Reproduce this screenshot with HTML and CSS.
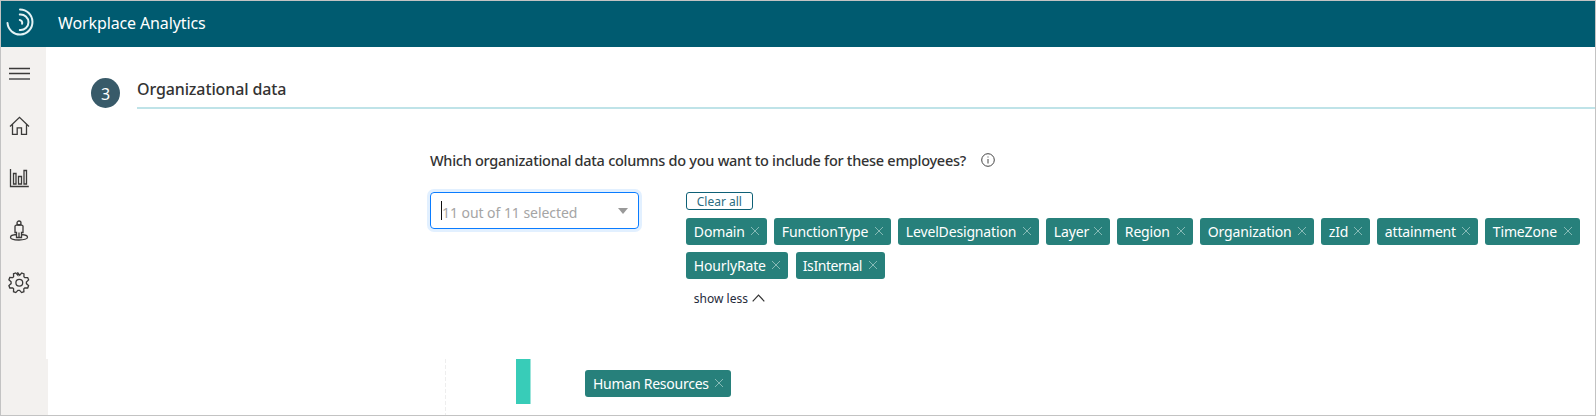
FILE: index.html
```html
<!DOCTYPE html>
<html lang="en">
<head>
<meta charset="utf-8">
<title>Workplace Analytics</title>
<link rel="stylesheet" href="styles.css">
</head>
<body>
<svg class="defs" width="0" height="0"><symbol id="x" viewBox="0 0 10 10"><path d="M1 1l8 8M9 1l-8 8"/></symbol></svg>
<div class="app">
<header class="header">
<svg class="logo" viewBox="0 0 30 30" fill="none"><path d="M15 2.500a12.500 12.500 0 1 1-12.500 13.500"/><path d="M14.800 7.500a7.800 7.800 0 1 1 0 15.500"/><path d="M14.800 13a3 3 0 0 1 2.300 3.800"/></svg>
<span class="product">Workplace Analytics</span>
</header>
<div class="body">
<nav class="sidebar">
<svg class="icon" viewBox="0 0 22 22"><path d="M1 6.500h21M1 11.500h21"/><path class="soft" d="M1 17h21"/></svg>
<svg class="icon" viewBox="0 0 22 22"><path d="M2 11.500L11.500 2.300l9.500 9.200M4.500 9.300v10h4.700v-6.500h4.300v6.500h5v-10"/></svg>
<svg class="icon" viewBox="0 0 22 22"><path d="M2.500 2v17.500h18.300M5.500 6.500h2.500v10.500h-2.500zM10.500 9.500h3v7.500h-3zM16 3.500h2.500v13.500H16z"/></svg>
<svg class="icon" viewBox="0 0 22 22"><circle cx="11" cy="3" r="2"/><path d="M8.500 5h5l1.500 1v6.500h-1.500v5h-5v-5H7V6zM11 12.500v5M8.500 14.500c-3.500.3-6 1.300-6 2.700 0 1.700 3.800 2.800 8.500 2.800s8.500-1.100 8.500-2.800c0-1.400-2.500-2.400-6-2.700"/></svg>
<svg class="icon" viewBox="0 0 22 22"><path d="M9.900 1l1.800 2.200L13.700 1l2.300.9-.1 2.900.9.9 2.900-.1.900 2.300-2.200 2.100v1.600l2.200 2-.9 2.400-2.900-.1-1 .9.100 2.900-2.300.9-2-2.200h-1.700l-2.100 2.200-2.300-.9.100-2.900-.9-.9-2.900.1-.9-2.400 2.200-2V9.900L.9 7.800l.9-2.300 2.900.1.900-.9-.1-2.900 2.300-.9 2 2.200z"/><circle cx="11.300" cy="10.800" r="3.400"/></svg>
</nav>
<main class="main">
<section class="step"><span class="number">3</span><h1 class="title">Organizational data</h1></section>
<section class="columns">
<div class="question"><span class="q">Which organizational data columns do you want to include for these employees?</span><svg class="info" viewBox="0 0 14 14"><circle cx="7" cy="7" r="6.300"/><path d="M7 6v4.500M7 3.500v1"/></svg></div>
<div class="picker">
<div class="select"><i class="caret"></i><span class="placeholder">11 out of 11 selected</span><i class="arrow"></i></div>
<div class="selection">
<button class="clear">Clear all</button>
<div class="tags">
<span class="tag domain">Domain<svg><use href="#x"/></svg></span>
<span class="tag function">FunctionType<svg><use href="#x"/></svg></span>
<span class="tag level">LevelDesignation<svg><use href="#x"/></svg></span>
<span class="tag layer">Layer<svg><use href="#x"/></svg></span>
<span class="tag region">Region<svg><use href="#x"/></svg></span>
<span class="tag organization">Organization<svg><use href="#x"/></svg></span>
<span class="tag zid">zId<svg><use href="#x"/></svg></span>
<span class="tag attainment">attainment<svg><use href="#x"/></svg></span>
<span class="tag timezone">TimeZone<svg><use href="#x"/></svg></span>
<span class="tag hourly">HourlyRate<svg><use href="#x"/></svg></span>
<span class="tag internal">IsInternal<svg><use href="#x"/></svg></span>
</div>
<div class="less"><span>show less</span><svg viewBox="0 0 13 8"><path d="M.7 7.300L6.500 1.200l5.800 6.100"/></svg></div>
</div>
</div>
</section>
</main>
</div>
<div class="lower">
<div class="rail"></div><div class="guide"></div><div class="bar"></div>
<span class="tag human">Human Resources<svg><use href="#x"/></svg></span>
</div>
</div>
</body>
</html>
```
FILE: styles.css
```css
* { box-sizing: border-box; }
body { margin: 0; background: #fff; font-family: "Noto Sans", "Open Sans", sans-serif; color: #333; }
.defs { display: block; }
.app { width: 1596px; height: 416px; border: 1px solid #c3c3c3; overflow: hidden; display: flex; flex-direction: column; }
.header { height: 46px; flex: none; background: #005b70; display: flex; color: #fff; }
.logo { width: 30px; height: 30px; margin: 6px 0 0 4px; stroke: #e4f3f5; stroke-width: 2; stroke-linecap: round; }
.product { margin-left: 23px; font-size: 16px; line-height: 22px; padding-top: 11px; letter-spacing: -.12px; }
.body { height: 312px; flex: none; display: flex; }
.sidebar { width: 45px; flex: none; background: #f3f1ef; padding: 15px 0 0 7px; display: flex; flex-direction: column; gap: 30.500px; }
.icon { width: 22px; height: 22px; flex: none; fill: none; stroke: #3b3a39; stroke-width: 1.300; }
.soft { stroke: #777; stroke-width: 2; }
.main { flex: 1; min-width: 0; }
.step { display: flex; height: 62px; padding-left: 45px; }
.number { width: 29px; height: 30px; margin-top: 31px; border-radius: 50%; background: #385a69; color: #fff; font-size: 16px; line-height: 33px; text-align: center; }
.title { margin: 0 0 0 17px; flex: 1; font-size: 16px; font-weight: 500; line-height: 24px; padding-top: 30px; border-bottom: 2px solid #bfe3e8; letter-spacing: -.12px; }
.columns { padding: 40px 0 0 384px; }
.question { display: flex; height: 24px; font-size: 14.500px; font-weight: 500; line-height: 22px; }
.q { width: 536px; white-space: nowrap; letter-spacing: -.275px; }
.info { width: 14px; height: 14px; margin: 4px 0 0 15px; fill: none; stroke: #444; stroke-width: 1; }
.picker { display: flex; padding-top: 19px; }
.select { width: 209px; height: 37px; border: 1px solid #0a7cff; border-radius: 4px; box-shadow: 0 0 0 3px #e2f0ff; display: flex; padding: 8px 10px 0 10px; }
.caret { width: 1px; height: 19px; background: #111; }
.placeholder { flex: 1; color: #a5a5a5; font-size: 14px; line-height: 23px; white-space: nowrap; letter-spacing: -.05px; }
.arrow { margin-top: 7px; width: 0; height: 0; border: 5.500px solid transparent; border-top: 6px solid #999; border-bottom: 0; }
.selection { margin-left: 47px; width: 910px; }
.clear { display: block; width: 67px; height: 18px; padding: 0; border: 1px solid #0e6076; border-radius: 3px; background: #fff; color: #2c6c80; font: 12px/17px "Noto Sans", sans-serif; }
.tags { margin-top: 8px; display: flex; flex-wrap: wrap; gap: 7px; }
.tag { height: 27px; flex: none; padding: 0 7px 0 8px; border-radius: 3px; background: #27807b; color: #fff; font-size: 14px; line-height: 27px; letter-spacing: -.16px; display: flex; justify-content: space-between; white-space: nowrap; }
.tag svg { width: 10px; height: 10px; margin: 8px 0 0; flex: none; stroke: #86bab6; stroke-width: 1; }
.domain { width: 81px; }
.function { width: 117px; }
.level { width: 141px; }
.layer { width: 64px; }
.region { width: 76px; }
.organization { width: 114px; }
.zid { width: 49px; }
.attainment { width: 101px; }
.timezone { width: 95px; }
.hourly { width: 102px; }
.internal { width: 89px; margin-left: 1px; padding-left: 7px; letter-spacing: -.45px; }
.less { display: flex; padding: 11px 0 0 8px; color: #252a3a; font-size: 12px; line-height: 18px; }
.less svg { width: 13px; height: 8px; margin: 4px 0 0 4px; fill: none; stroke: #333; stroke-width: 1.200; }
.lower { height: 56px; display: flex; }
.rail { width: 47px; background: #f3f1ef; }
.guide { margin-left: 397px; width: 1px; background: repeating-linear-gradient(#eee 0 4px, #fff 4px 6px); }
.bar { margin-left: 70px; width: 15px; height: 45px; background: linear-gradient(90deg, #38ccb8 0 14px, #9ce5db 14px); }
.human { margin: 11px 0 0 54px; width: 146px; letter-spacing: -.25px; }
```
